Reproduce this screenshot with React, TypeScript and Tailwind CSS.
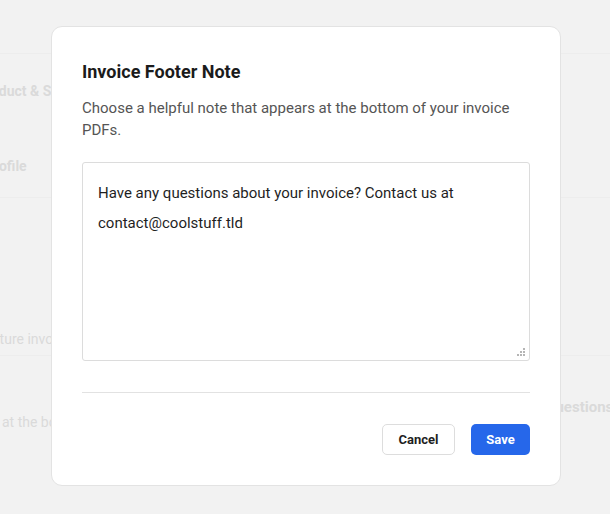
import { useState } from 'react';

const font = { fontFamily: 'Roboto, "Liberation Sans", Arial, sans-serif' };

function BackgroundPage() {
  return (
    <div className="absolute inset-0 flex flex-col text-[#dadada]">
      <div className="h-[54px] flex-none border-b border-[#ededed]" />
      <div className="h-[144px] flex-none border-b border-[#ededed] pt-[27px]">
        <div className="ml-[-23px] text-[14px] leading-[20px] font-bold whitespace-nowrap">
          Product &amp; Services
        </div>
        <div className="mt-[49px] flex items-center gap-[28px] ml-[-15px]">
          <span className="text-[14px] leading-[20px] font-bold whitespace-nowrap">Profile</span>
          <div className="h-[31px] w-[120px] rounded-[4px] border border-[#ececec]" />
        </div>
      </div>
      <div className="h-[158px] flex-none border-b border-[#ededed] flex flex-col justify-end pb-[6px]">
        <div className="ml-[-13px] text-[14px] leading-[20px] whitespace-nowrap">future invoices</div>
      </div>
      <div className="relative flex-1">
        <div className="absolute left-[547px] top-[41px] text-[15px] leading-[20px] font-bold whitespace-nowrap">
          questions
        </div>
        <div className="pt-[56px] ml-[2px] text-[14px] leading-[20px] whitespace-nowrap">at the bottom</div>
      </div>
    </div>
  );
}

function ResizeGrip() {
  return (
    <svg
      className="absolute right-[3px] bottom-[3px]"
      width="9"
      height="9"
      viewBox="0 0 9 9"
      fill="#b5b5b5"
    >
      <rect x="6" y="0" width="2" height="2" />
      <rect x="3" y="3" width="2" height="2" />
      <rect x="6" y="3" width="2" height="2" />
      <rect x="0" y="6" width="2" height="2" />
      <rect x="3" y="6" width="2" height="2" />
      <rect x="6" y="6" width="2" height="2" />
    </svg>
  );
}

export default function App() {
  const [note] = useState(
    'Have any questions about your invoice? Contact us at contact@coolstuff.tld'
  );

  return (
    <div className="relative w-[610px] h-[514px] overflow-hidden bg-[#f2f2f2]" style={font}>
      <BackgroundPage />

      <div className="absolute left-[51px] top-[26px] w-[510px] h-[460px] bg-white border border-[#e3e3e3] rounded-[11px] px-[30px] pt-[33px] pb-[30px] flex flex-col">
        <h2 className="text-[18px] leading-[24px] font-bold text-[#1b1b1b]">Invoice Footer Note</h2>
        <p className="mt-[13px] text-[15px] leading-[22px] text-[#555555]">
          Choose a helpful note that appears at the bottom of your invoice PDFs.
        </p>

        <div className="relative mt-[21px] h-[199px] border border-[#dcdcdc] rounded-[3px] px-[15px] pt-[15px] text-[15px] leading-[30px] text-[#1f1f1f]">
          {note}
          <ResizeGrip />
        </div>

        <div className="mt-[31px] h-px bg-[#e2e2e2]" />

        <div className="mt-[31px] flex justify-end gap-[16px]">
          <button className="h-[31px] w-[73px] rounded-[5px] border border-[#dddddd] bg-white text-[13px] font-bold text-[#1f1f1f]">
            Cancel
          </button>
          <button className="h-[31px] w-[59px] rounded-[5px] bg-[#2667ea] text-[13px] font-bold text-white">
            Save
          </button>
        </div>
      </div>
    </div>
  );
}
